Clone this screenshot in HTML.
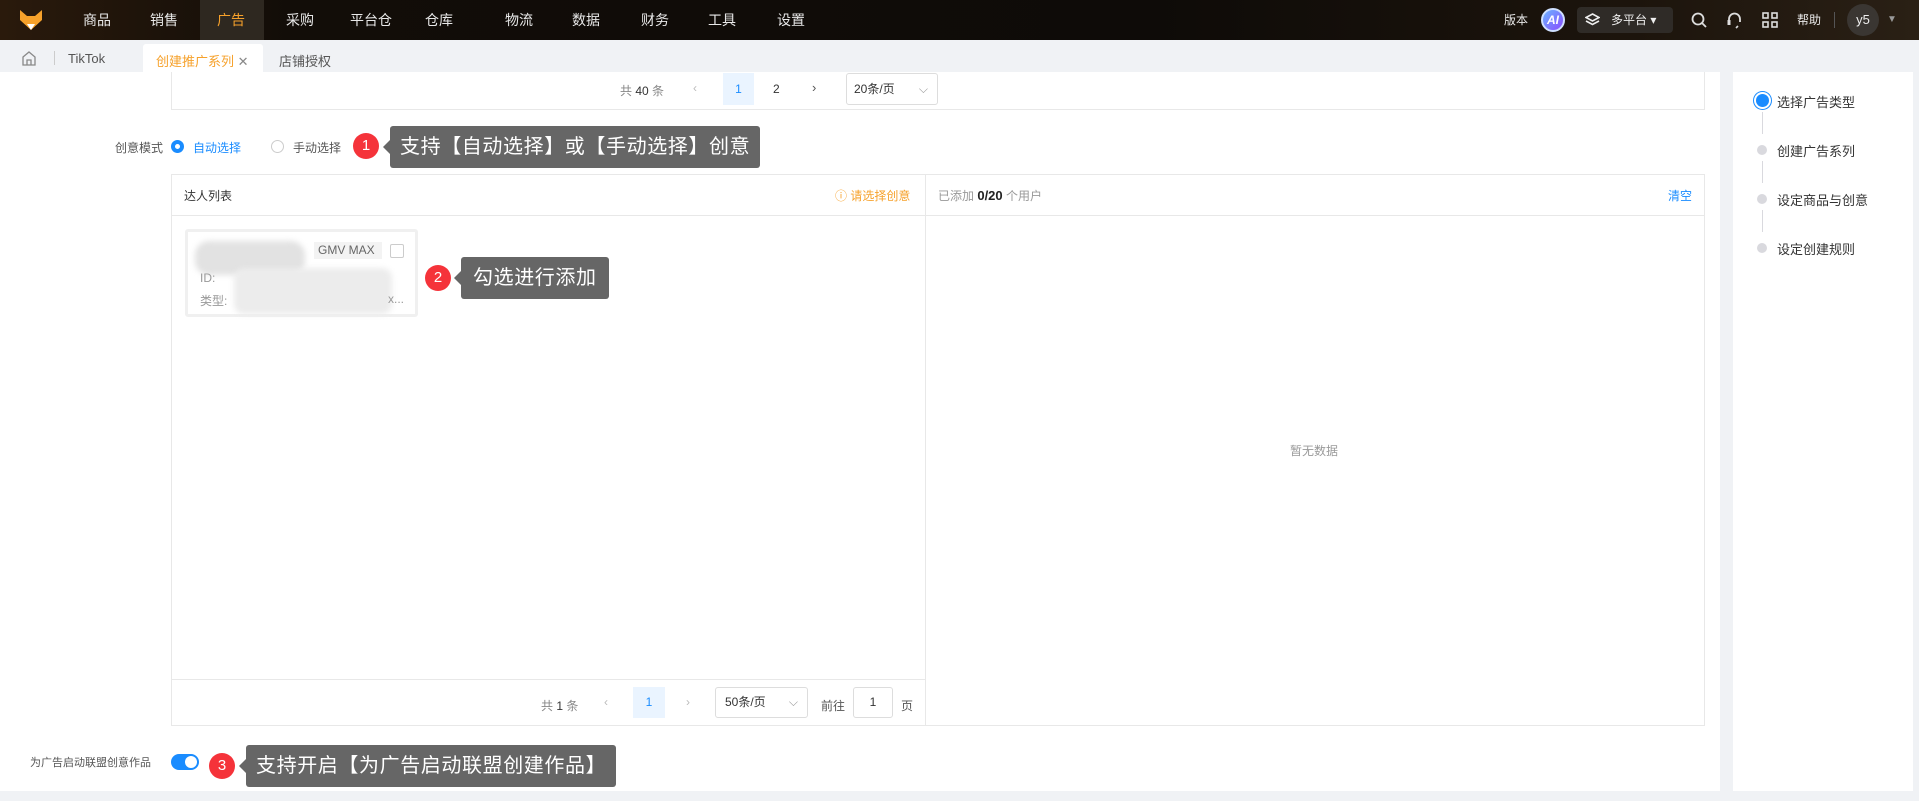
<!DOCTYPE html>
<html><head><meta charset="utf-8"><style>
*{box-sizing:border-box;margin:0;padding:0}
body{width:1919px;height:801px;overflow:hidden;background:#f0f2f5;font-family:"Liberation Sans","Noto Sans CJK SC",sans-serif;position:relative;color:#333}
.a{position:absolute}
.nav{left:0;top:0;width:1919px;height:40px;background:linear-gradient(90deg,#2a1a0c 0%,#120d08 15%,#0e0b08 60%,#1c140c 85%,#2a2015 100%)}
.ni{position:absolute;top:0;height:40px;line-height:40px;color:#e8e8e8;font-size:14px;transform:translateX(-50%)}
.tip{background:#666;color:#fff;border-radius:3px;font-size:20px;line-height:42px;padding:0 10px;letter-spacing:0.6px}
.tip:before{content:"";position:absolute;left:-7px;top:50%;margin-top:-7px;border:7px solid transparent;border-left:0;border-right-color:#666}
.badge{width:26px;height:26px;border-radius:50%;background:#f5333a;color:#fff;font-size:15px;text-align:center;line-height:26px}
.sm{font-size:12px;color:#555}
.dot{width:10px;height:10px;border-radius:50%;background:#d9d9de}
.vl{width:1px;background:#d9d9de}
</style></head><body>
<div class="a nav"></div>
<svg class="a" style="left:18px;top:8px" width="26" height="24" viewBox="0 0 26 24"><path d="M2 2 L9 8 L17 8 L24 2 L24 12 L13 22 L2 12Z" fill="#f6a12b"/><path d="M9 16 L13 22 L17 16Z" fill="#fff"/></svg>
<div class="ni" style="left:97px">商品</div><div class="ni" style="left:164px">销售</div>
<div class="a" style="left:200px;top:0;width:64px;height:40px;background:#2e2820"></div>
<div class="ni" style="left:231px;color:#f6a12b">广告</div><div class="ni" style="left:300px">采购</div>
<div class="ni" style="left:371px">平台仓</div><div class="ni" style="left:439px">仓库</div><div class="ni" style="left:519px">物流</div>
<div class="ni" style="left:586px">数据</div><div class="ni" style="left:655px">财务</div><div class="ni" style="left:722px">工具</div><div class="ni" style="left:791px">设置</div>
<div class="ni" style="left:1516px;font-size:12px">版本</div>
<div class="a" style="left:1541px;top:8px;width:24px;height:24px;border-radius:50%;background:linear-gradient(135deg,#6ab4ff,#8a4dff);border:2px solid #cfe0ff;color:#fff;font-size:12px;font-weight:bold;text-align:center;line-height:20px;font-style:italic">AI</div>
<div class="a" style="left:1577px;top:7px;width:96px;height:26px;background:#2f2b27;border-radius:4px;color:#eee;font-size:12px;line-height:26px;padding-left:34px">多平台 ▾</div>
<svg class="a" style="left:1585px;top:13px" width="15" height="14" viewBox="0 0 15 14"><path d="M7.5 1 L14 4.5 L7.5 8 L1 4.5Z M1 8 L7.5 11.5 L14 8" fill="none" stroke="#eee" stroke-width="1.6"/></svg>
<svg class="a" style="left:1691px;top:12px" width="16" height="16"><circle cx="7" cy="7" r="5.5" fill="none" stroke="#ddd" stroke-width="1.8"/><path d="M11 11l4 4" stroke="#ddd" stroke-width="1.8"/></svg>
<svg class="a" style="left:1726px;top:11px" width="17" height="18"><path d="M3 11V8a5.5 5.5 0 0 1 11 0v3" fill="none" stroke="#ddd" stroke-width="1.8"/><rect x="1.5" y="9" width="3" height="5" fill="#ddd"/><path d="M12 15l-2 2" stroke="#ddd" stroke-width="1.6"/></svg>
<svg class="a" style="left:1762px;top:12px" width="16" height="16"><g fill="none" stroke="#ddd" stroke-width="1.6"><rect x="1" y="1" width="5" height="5"/><rect x="10" y="1" width="5" height="5"/><rect x="1" y="10" width="5" height="5"/><rect x="10" y="10" width="5" height="5"/></g></svg>
<div class="ni" style="left:1809px;font-size:12px">帮助</div>
<div class="a" style="left:1834px;top:12px;width:1px;height:16px;background:#555"></div>
<div class="a" style="left:1847px;top:4px;width:32px;height:32px;border-radius:50%;background:#3a3632;color:#eee;font-size:13px;text-align:center;line-height:32px">y5</div>
<div class="a" style="left:1887px;top:14px;color:#999;font-size:10px">▼</div>
<!-- tab bar -->
<svg class="a" style="left:22px;top:51px" width="14" height="15"><path d="M1 6 L7 1 L13 6 V14 H1Z M5 14 V9 H9 V14" fill="none" stroke="#888" stroke-width="1.3"/></svg>
<div class="a" style="left:54px;top:51px;width:1px;height:14px;background:#ccc"></div>
<div class="a" style="left:68px;top:51px;font-size:13px;color:#555">TikTok</div>
<div class="a" style="left:143px;top:44px;width:120px;height:28px;background:#fff;border-radius:3px 3px 0 0"></div>
<div class="a" style="left:156px;top:51px;font-size:13px;color:#f6a12b">创建推广系列 <span style="color:#888">✕</span></div>
<div class="a" style="left:279px;top:51px;font-size:13px;color:#555">店铺授权</div>
<!-- main -->
<div class="a" style="left:0;top:72px;width:1720px;height:719px;background:#fff"></div>
<div class="a" style="left:1733px;top:72px;width:180px;height:719px;background:#fff"></div>
<div class="a" style="left:171px;top:72px;width:1534px;height:38px;border:1px solid #e8e8e8;border-top:0"></div>
<div class="a sm" style="left:620px;top:82px;color:#888">共 <b style="color:#333;font-weight:normal">40</b> 条</div>
<div class="a sm" style="left:693px;top:81px;color:#bbb">‹</div>
<div class="a" style="left:723px;top:73px;width:31px;height:32px;background:#eaf4ff;color:#1a8cff;font-size:12px;text-align:center;line-height:32px">1</div>
<div class="a" style="left:773px;top:82px;font-size:12px">2</div>
<div class="a" style="left:812px;top:80px;font-size:13px;color:#555">›</div>
<div class="a" style="left:846px;top:73px;width:92px;height:32px;border:1px solid #ddd;border-radius:3px;font-size:12px;line-height:30px;padding-left:7px">20条/页<span style="position:absolute;right:9px;color:#999">⌵</span></div>
<!-- mode -->
<div class="a sm" style="left:115px;top:139px">创意模式</div>
<div class="a" style="left:171px;top:140px;width:13px;height:13px;border-radius:50%;border:4px solid #1a8cff"></div>
<div class="a sm" style="left:193px;top:139px;color:#1a8cff">自动选择</div>
<div class="a" style="left:271px;top:140px;width:13px;height:13px;border-radius:50%;border:1px solid #ccc"></div>
<div class="a sm" style="left:293px;top:139px">手动选择</div>
<div class="a badge" style="left:353px;top:133px">1</div>
<div class="a tip" style="left:390px;top:126px">支持【自动选择】或【手动选择】创意</div>
<!-- box -->
<div class="a" style="left:171px;top:174px;width:1534px;height:552px;border:1px solid #e8e8e8"></div>
<div class="a" style="left:171px;top:215px;width:1534px;height:1px;background:#e8e8e8"></div>
<div class="a" style="left:925px;top:174px;width:1px;height:552px;background:#e8e8e8"></div>
<div class="a" style="left:171px;top:679px;width:755px;height:1px;background:#e8e8e8"></div>
<div class="a sm" style="left:184px;top:187px;color:#333">达人列表</div>
<div class="a sm" style="left:835px;top:187px;color:#f6a12b">ⓘ 请选择创意</div>
<div class="a sm" style="left:938px;top:187px;color:#999">已添加 <b style="color:#222;font-size:13px">0/20</b> 个用户</div>
<div class="a sm" style="left:1668px;top:187px;color:#1a8cff">清空</div>
<div class="a" style="left:185px;top:229px;width:233px;height:88px;border:3px solid #f0f0f0;border-radius:3px"></div>
<div class="a" style="left:195px;top:241px;width:110px;height:34px;background:#e2e2e2;border-radius:14px;filter:blur(3px)"></div>
<div class="a" style="left:234px;top:268px;width:158px;height:46px;background:#ececec;border-radius:10px;filter:blur(3px)"></div>
<div class="a" style="left:314px;top:242px;width:68px;height:17px;background:#f3f3f3;font-size:12px;color:#666;line-height:17px;padding-left:4px">GMV MAX</div>
<div class="a" style="left:390px;top:244px;width:14px;height:14px;border:1px solid #ccc;border-radius:2px"></div>
<div class="a sm" style="left:200px;top:271px;color:#999">ID:</div>
<div class="a sm" style="left:200px;top:292px;color:#999">类型:</div>
<div class="a sm" style="left:388px;top:292px;color:#999">x...</div>
<div class="a badge" style="left:425px;top:265px">2</div>
<div class="a tip" style="left:461px;top:257px;padding:0 12px">勾选进行添加</div>
<div class="a sm" style="left:1290px;top:442px;color:#999">暂无数据</div>
<div class="a sm" style="left:541px;top:697px;color:#888">共 <span style="color:#333">1</span> 条</div>
<div class="a sm" style="left:604px;top:695px;color:#bbb">‹</div>
<div class="a" style="left:633px;top:687px;width:32px;height:31px;background:#eaf4ff;color:#1a8cff;font-size:12px;text-align:center;line-height:31px">1</div>
<div class="a sm" style="left:686px;top:695px;color:#bbb">›</div>
<div class="a" style="left:715px;top:687px;width:93px;height:31px;border:1px solid #ddd;border-radius:3px;font-size:12px;line-height:29px;padding-left:9px">50条/页<span style="position:absolute;right:9px;color:#999">⌵</span></div>
<div class="a sm" style="left:821px;top:697px">前往</div>
<div class="a" style="left:853px;top:687px;width:40px;height:31px;border:1px solid #ddd;border-radius:3px;font-size:12px;text-align:center;line-height:29px">1</div>
<div class="a sm" style="left:901px;top:697px">页</div>
<!-- bottom -->
<div class="a" style="left:30px;top:754px;font-size:11px;color:#555">为广告启动联盟创意作品</div>
<div class="a" style="left:171px;top:754px;width:28px;height:16px;border-radius:8px;background:#1a8cff"></div>
<div class="a" style="left:185px;top:756px;width:12px;height:12px;border-radius:50%;background:#fff"></div>
<div class="a badge" style="left:209px;top:753px">3</div>
<div class="a tip" style="left:246px;top:745px">支持开启【为广告启动联盟创建作品】</div>
<!-- steps -->
<div class="a" style="left:1756px;top:94px;width:13px;height:13px;border-radius:50%;background:#1a8cff;box-shadow:0 0 0 2px #fff,0 0 0 3px #1a8cff"></div>
<div class="a vl" style="left:1762px;top:112px;height:22px"></div>
<div class="a vl" style="left:1762px;top:161px;height:22px"></div>
<div class="a vl" style="left:1762px;top:210px;height:22px"></div>
<div class="a dot" style="left:1757px;top:145px"></div>
<div class="a dot" style="left:1757px;top:194px"></div>
<div class="a dot" style="left:1757px;top:243px"></div>
<div class="a" style="left:1777px;top:92px;font-size:13px">选择广告类型</div>
<div class="a" style="left:1777px;top:141px;font-size:13px">创建广告系列</div>
<div class="a" style="left:1777px;top:190px;font-size:13px">设定商品与创意</div>
<div class="a" style="left:1777px;top:239px;font-size:13px">设定创建规则</div>
</body></html>
